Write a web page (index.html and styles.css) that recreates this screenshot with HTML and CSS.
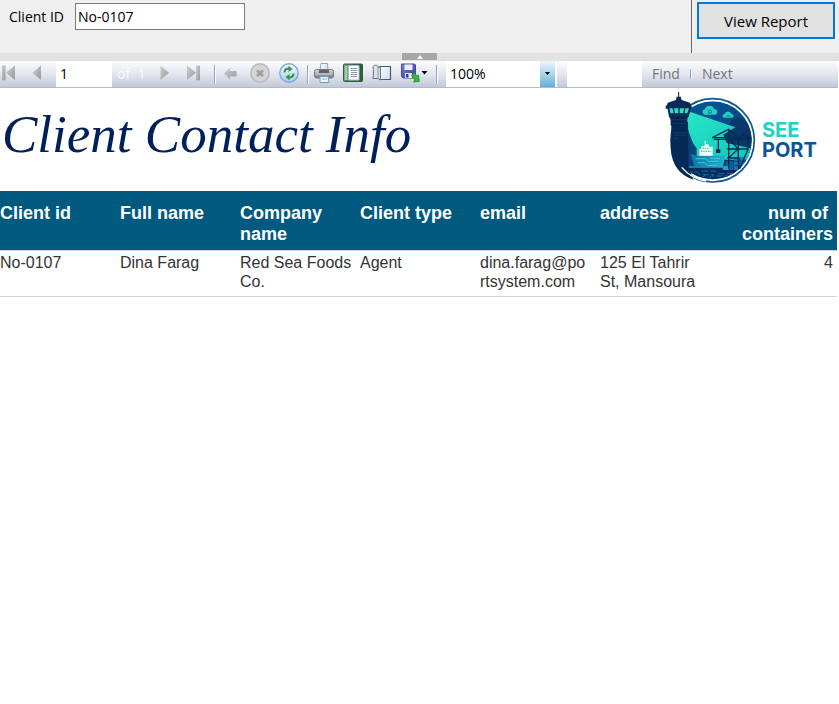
FILE: index.html
```html
<!DOCTYPE html>
<html lang="en">
<head>
<meta charset="utf-8">
<meta name="viewport" content="width=device-width, initial-scale=1">
<title>Client Contact Info</title>
<link rel="stylesheet" href="styles.css">
</head>
<body>
<form class="params">
  <div class="params-fields">
    <label for="client-id">Client ID</label>
    <input class="param-input" id="client-id" type="text" value="No-0107">
  </div>
  <div class="params-action">
    <button class="view-report" type="button">View Report</button>
  </div>
</form>
<div class="splitter">
  <button class="splitter-handle" type="button" aria-label="Hide parameters">
    <svg width="6" height="4" viewBox="0 0 6 4"><path d="M3 0L6 4H0z" fill="#f4f4f4"/></svg>
  </button>
</div>
<div class="toolbar" role="toolbar" aria-label="Report toolbar">
  <svg class="defs" width="0" height="0" aria-hidden="true">
    <defs>
      <linearGradient id="grey" x1="0" y1="0" x2="1" y2="1"><stop offset="0" stop-color="#cfcfcf"/><stop offset="1" stop-color="#989898"/></linearGradient>
      <linearGradient id="blueglass" x1="0" y1="0" x2="0" y2="1"><stop offset="0" stop-color="#f4faff"/><stop offset="1" stop-color="#a9cdf5"/></linearGradient>
      <linearGradient id="paper" x1="0" y1="0" x2="1" y2="1"><stop offset="0" stop-color="#ffffff"/><stop offset="1" stop-color="#cbdaf0"/></linearGradient>
      <linearGradient id="metal" x1="0" y1="0" x2="0" y2="1"><stop offset="0" stop-color="#d8dadd"/><stop offset="1" stop-color="#75797f"/></linearGradient>
      <linearGradient id="disk" x1="0" y1="0" x2="1" y2="1"><stop offset="0" stop-color="#8080d8"/><stop offset="1" stop-color="#383894"/></linearGradient>
      <linearGradient id="green" x1="0" y1="0" x2="1" y2="0"><stop offset="0" stop-color="#5c9068"/><stop offset="1" stop-color="#265b36"/></linearGradient>
    </defs>
  </svg>
  <div class="group group-nav">
    <button class="tool" type="button" aria-label="First page"><svg viewBox="0 0 20 20"><path d="M2 2.500h3.500v15H2z" fill="url(#grey)"/><path d="M15 2.500v14.500L6 9.750z" fill="url(#grey)"/></svg></button>
    <button class="tool" type="button" aria-label="Previous page"><svg viewBox="0 0 20 20"><path d="M13 2.500v14.500L4.500 9.750z" fill="url(#grey)"/></svg></button>
    <input class="page-input" type="text" value="1" aria-label="Current page">
  </div>
  <span class="page-count">of&nbsp; 1</span>
  <div class="group group-nav">
    <button class="tool" type="button" aria-label="Next page"><svg viewBox="0 0 20 20"><path d="M5.500 2.500v14.500L14 9.750z" fill="url(#grey)"/></svg></button>
    <button class="tool" type="button" aria-label="Last page"><svg viewBox="0 0 20 20"><path d="M4 2.500v14.500L13 9.750z" fill="url(#grey)"/><path d="M13 2.500h4v15h-4z" fill="url(#grey)"/></svg></button>
  </div>
  <span class="sep sep-nav"></span>
  <div class="group">
    <button class="tool" type="button" aria-label="Back to parent report"><svg viewBox="0 0 20 20"><path d="M3 10.500L9 5v3h6.500v5.500H9v3z" fill="url(#grey)"/></svg></button>
    <button class="tool" type="button" aria-label="Stop"><svg viewBox="0 0 20 20"><circle cx="10" cy="10" r="9.200" fill="#d5d5d6" stroke="#b9b9ba" stroke-width="1.400"/><path d="M7 7.500l6 5.500M13 7.500L7 13" stroke="#a0a0a0" stroke-width="2.800"/></svg></button>
    <button class="tool" type="button" aria-label="Refresh"><svg viewBox="0 0 20 20"><circle cx="10" cy="10" r="9.200" fill="url(#blueglass)" stroke="#7fa8d8" stroke-width="1.400"/><path d="M5.500 9.500C5.500 7 7 5.500 10 5.500" fill="none" stroke="#2c9c2c" stroke-width="2"/><path d="M9.500 2.500L13.500 6l-4 3z" fill="#2c9c2c"/><path d="M14.500 10.500c0 2.500-1.500 4-4.500 4" fill="none" stroke="#2c9c2c" stroke-width="2"/><path d="M10.500 17.500L6.500 14l4-3z" fill="#2c9c2c"/></svg></button>
  </div>
  <span class="sep"></span>
  <div class="group">
    <button class="tool" type="button" aria-label="Print"><svg viewBox="0 0 20 20"><path d="M6 7L7 .5h6.500L14 7z" fill="url(#paper)" stroke="#87a5c4"/><rect x=".5" y="6.500" width="19" height="8.500" rx="2" fill="url(#metal)" stroke="#777b82"/><path d="M5 7h10v3H5z" fill="#5d6269"/><path d="M1.500 11h17" stroke="#c8cace"/><path d="M6 13.500h8l1 6H6z" fill="#eaf6ff" stroke="#6e9cc2"/><path d="M8 16h5" stroke="#74b2db"/></svg></button>
    <button class="tool" type="button" aria-label="Print layout"><svg viewBox="0 0 20 20"><rect x=".5" y="1" width="19" height="17.500" rx="1" fill="url(#green)" stroke="#315d3e"/><path d="M1.500 2.500h3v14.500h-3z" fill="#a9c9af"/><path d="M5.500 2.500h10.500v14.500H5.500z" fill="#fff" stroke="#a6bcd0"/><path d="M8 5.500h6M8 7.500h6M8 9.500h6M8 11.500h6M8 13.500h6" stroke="#8796a8"/></svg></button>
    <button class="tool" type="button" aria-label="Page setup"><svg viewBox="0 0 20 20"><path d="M8 3.500h10.500v13H8z" fill="url(#paper)" stroke="#445b7c" stroke-width="1.200"/><path d="M1 3.500C3 1.500 5 2 6 3.500l2.500 1.500v12l-2.500-1.500H.8c1-2.500.8-8 .2-12z" fill="#dce2e7" stroke="#68727c"/><path d="M6 3.500v12" stroke="#8d969e"/></svg></button>
    <button class="tool tool-export" type="button" aria-label="Export"><svg viewBox="0 0 20 20"><path d="M.5 1h13l1 1v13H2L.5 13.500z" fill="url(#disk)" stroke="#4747a3"/><path d="M3.500 1.500h8V7h-8z" fill="#e9eeff"/><path d="M4 10h7v5H4z" fill="#e8e9f0"/><path d="M5 11h2.500v3.500H5z" fill="#3b3b8d"/><path d="M10.500 12.500l3-2.500 2.500 3 1.500-1 .8 6.500-5.800.5 1.300-2z" fill="#2fba38" stroke="#20902a" stroke-width=".8"/></svg><svg class="caret" viewBox="0 0 7 4"><path d="M.5 0h6L3.500 3.500z"/></svg></button>
  </div>
  <span class="sep"></span>
  <div class="zoom">
    <select class="zoom-select" aria-label="Zoom"><option>100%</option></select>
    <span class="zoom-arrow"><svg class="caret" viewBox="0 0 7 4"><path d="M1 0h5L3.500 3z"/></svg></span>
  </div>
  <input class="find-input" type="text" aria-label="Find text">
  <button class="link-btn" type="button">Find</button>
  <span class="sep sep-short"></span>
  <button class="link-btn" type="button">Next</button>
</div>
<main class="report">
  <header class="report-head">
    <h1>Client Contact Info</h1>
    <div class="logo">
      <svg class="logo-mark" viewBox="0 0 300 300" aria-hidden="true">
        <defs>
          <linearGradient id="sky" x1="0" y1="0" x2="1" y2="1"><stop offset="0" stop-color="#06589a"/><stop offset="1" stop-color="#073e78"/></linearGradient>
          <linearGradient id="beam" x1="0" y1="0" x2="1" y2="1"><stop offset="0" stop-color="#2ae5c5"/><stop offset="1" stop-color="#10c6bd"/></linearGradient>
          <linearGradient id="hull" x1="0" y1="0" x2="1" y2="0"><stop offset="0" stop-color="#0d74ad"/><stop offset="1" stop-color="#22b4cc"/></linearGradient>
          <clipPath id="disc"><circle cx="158" cy="157" r="117"/></clipPath>
        </defs>
        <circle cx="158" cy="157" r="125" fill="#fff" stroke="#0b568f" stroke-width="5"/>
        <g clip-path="url(#disc)">
          <path d="M40 40h240v240H40z" fill="url(#sky)"/>
          <path d="M190 128c5-18 20-18 25-30 10-12 32-10 42 4l30 28v100H185z" fill="#073869"/>
          <path d="M80 68L226 118 190 140 200 165 278 182 278 215 110 215 84 125z" fill="url(#beam)"/>
          <path d="M84 125c8 20 12 40 26 55v60H84z" fill="#0b4379"/>
          <path d="M40 238h240v50H40z" fill="#052b5c"/>
          <path d="M85 240h125v-6H85z" fill="#117eab"/>
          <path d="M92 198l22 6h72l12-7-10 41H104z" fill="url(#hull)"/>
          <path d="M106 212h30l10 8h30M112 224h22l9 8h28M150 211h30" fill="none" stroke="#5ee0da" stroke-width="2"/>
          <path d="M118 203v-20h6v-9h10v-15h4v10h8v7h12v27z" fill="#effffb"/>
          <path d="M123 190h30M128 181h22" stroke="#1ab1b8" stroke-width="3" stroke-dasharray="4 3"/>
          <path d="M198 220h22v26h-22z" fill="#08609b"/><path d="M222 208h32v38h-32z" fill="#0f7caf"/><path d="M188 234h18v12h-18z" fill="#19a5bd"/>
          <path d="M222 220h32M222 233h32M238 208v38" stroke="#07467b" stroke-width="3"/>
          <path d="M78 252h34l8 8h42M125 249h40l9 8h45M98 268h30l8-7M145 272l10-8h50M222 255h32" fill="none" stroke="#1175aa" stroke-width="3" stroke-dasharray="20 6"/>
        </g>
        <path d="M156 149h116M161 154h108M158 148l48-24 28 24M235 150l15-12 24 13M206 124v118M235 148v94M202 183h62M202 210h35M206 150l28 33-28 27M264 151v33l-25 58M175 153v32" fill="none" stroke="#052b55" stroke-width="4"/>
        <path d="M168 184h13v11h-13z" fill="#052b55"/>
        <path d="M136 80c-11 0-11-15-1-16 2-14 24-15 27-1 13 0 13 17 2 17zM194 89c-8 0-8-12 1-12 3-9 15-9 18 0 10 0 10 12 1 12z" fill="#24cfc6"/>
        <circle cx="150" cy="71" r="5" fill="none" stroke="#087099" stroke-width="3"/><path d="M151 82v8M199 84h12" stroke="#087099" stroke-width="3"/>
        <path d="M34 112l50-10 2 135 14 38C60 262 34 230 32 180z" fill="#052a58"/>
        <path d="M65 238c18 21 43 37 73 41" fill="none" stroke="#fff" stroke-width="4"/>
        <path d="M56 12v16" stroke="#071e49" stroke-width="3"/>
        <path d="M50 26h12l3 10 25 8 3 8 2 2v8H17v-8l4-2 2-8 25-8z" fill="#072a58"/>
        <path d="M22 60h71l-7 26-6 7v20H32V94l-5-8z" fill="#06264f"/>
        <path d="M28 61h10l3 15H31zM42 61h13v15H45zM59 61h13l-2 15H59zM76 61h11l-5 15h-8z" fill="#2cdec6"/>
        <path d="M27 82h58M30 95h53M36 107h45M40 134h39M40 141h39M40 152h15" stroke="#0d477a" stroke-width="2"/>
      </svg>
      <div class="logo-name"><span class="logo-see">SEE</span><span>PORT</span></div>
    </div>
  </header>
  <table class="clients">
    <thead>
      <tr><th>Client id</th><th>Full name</th><th>Company name</th><th>Client type</th><th>email</th><th>address</th><th class="num">num of&nbsp; containers</th></tr>
    </thead>
    <tbody>
      <tr><td>No-0107</td><td>Dina Farag</td><td>Red Sea Foods Co.</td><td>Agent</td><td class="email">dina.farag@portsystem.com</td><td>125 El Tahrir St, Mansoura</td><td class="num">4</td></tr>
    </tbody>
  </table>
</main>
</body>
</html>
```
FILE: styles.css
```css
* { box-sizing: border-box; }
body {
  margin: 0;
  background: #fff;
  color: #000;
  font: 14px/20px "Open Sans", "Noto Sans", sans-serif;
}
button, input, select { font: inherit; color: inherit; margin: 0; border-radius: 0; }
button { padding: 0; border: 0; background: none; }
svg { display: block; }
.defs { position: absolute; }

.params { display: flex; min-height: 53px; background: #efefef; }
.params-fields { flex: 1; display: flex; align-items: flex-start; padding: 3px 9px; gap: 8px; }
.params-fields label { width: 58px; line-height: 27px; white-space: nowrap; }
.param-input { width: 170px; height: 27px; padding: 0 2px; border: 1px solid #7a7a7a; background: #fff; }
.params-action { width: 148px; padding: 2px 4px 0 5px; border-left: 1px solid #696969; }
.view-report { width: 100%; height: 37px; border: 2px solid #0078d7; background: #e1e1e1; font-size: 15px; line-height: 18px; }

.splitter { display: flex; justify-content: center; height: 8px; background: #e2e2e2; }
.splitter-handle { display: flex; align-items: center; justify-content: center; width: 35px; height: 7px; background: #a7a7a7; }

.toolbar {
  display: flex;
  align-items: center;
  height: 27px;
  margin-right: 1px;
  border-bottom: 1px solid #b3b9cc;
  background: linear-gradient(#fdfdfe, #e3e6ef 50%, #c3c8da);
}
.group { display: flex; align-items: center; align-self: stretch; gap: 9px; }
.group-nav { gap: 8px; }
.tool { width: 20px; height: 20px; margin-bottom: 2px; }
.tool svg { width: 20px; height: 20px; }
.tool-export { display: flex; align-items: center; width: 27px; }
.tool .caret, .zoom .caret { width: 7px; height: 4px; flex: none; }
.page-input, .find-input { align-self: stretch; border: 0; background: #fff; }
.page-input { width: 56px; padding: 0 4px; }
.page-count { width: 38px; margin-left: 5px; color: #fafafc; white-space: nowrap; }
.sep { width: 2px; height: 19px; margin: 0 5px 0 8px; border-left: 1px solid #9ba2b8; border-right: 1px solid #fff; }
.sep-nav { margin-left: 11px; }
.zoom { position: relative; align-self: stretch; width: 111px; margin-left: 3px; border-right: 1px solid #fff; }
.zoom-select { width: 100%; height: 100%; padding: 0 4px; border: 0; background: #fff; appearance: none; }
.zoom-arrow {
  position: absolute;
  inset: 0 1px 0 auto;
  display: flex;
  align-items: center;
  justify-content: center;
  width: 15px;
  background: linear-gradient(#edf7fc, #a9d5e9 50%, #62afd8);
  pointer-events: none;
}
.find-input { width: 75px; margin-left: 10px; }
.link-btn { margin-left: 10px; color: #767676; }
.sep-short { height: 10px; margin: 0 0 0 10px; }

.report-head { display: flex; align-items: flex-start; justify-content: space-between; height: 103px; padding: 0 19px 0 2px; }
h1 {
  margin: 16px 0 0;
  color: #00205b;
  font: italic 53px/60px "Liberation Serif", "Times New Roman", serif;
  white-space: nowrap;
}
.logo { display: flex; width: 160px; }
.logo-mark { width: 100px; height: 100px; flex: none; }
.logo-name {
  display: flex;
  flex-direction: column;
  margin: 32px 0 0 2px;
  color: #0a5499;
  font: 700 20px/20px Inter, "Open Sans", sans-serif;
}
.logo-see { color: #20d2c0; }

.clients { width: calc(100% - 2px); border-collapse: collapse; table-layout: fixed; font: 16px/19px "Liberation Sans", Arial, sans-serif; }
.clients th, .clients td { width: 120px; text-align: left; vertical-align: top; border-bottom: 1px solid #d3d3d3; }
.clients th { padding: 12px 8px 5px 0; background: #005a80; color: #fff; font-size: 18px; line-height: 21px; }
.clients td { padding: 2px 8px 5px 0; color: #333; }
.clients .num { width: auto; padding-right: 4px; text-align: right; }
.clients th.num { padding-left: 20px; }
.clients .email { padding-right: 10px; overflow-wrap: anywhere; }
```
